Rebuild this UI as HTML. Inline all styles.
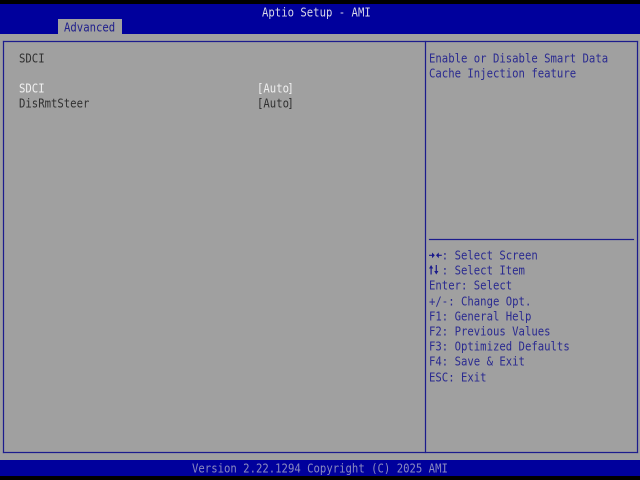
<!DOCTYPE html>
<html><head><meta charset="utf-8"><style>
html,body{margin:0;padding:0;background:#000}
#s{position:relative;width:640px;height:480px;overflow:hidden;background:#a0a0a0;font-family:"DejaVu Sans Mono","Liberation Mono",monospace;font-size:10.63px;line-height:15px;filter:blur(.3px)}
#s div{position:absolute}
.t{white-space:pre;color:#1a1a8c;height:15px;transform:scaleY(1.14);transform-origin:50% 50%}
.k{color:#303030}
.w{color:#f0f0f0}
.b{background:#00009c}
.v{color:#2a2a90}
.l{background:#1c1c8c;box-shadow:0 0 1px #3a3a9c}
.n{margin-left:-1.6px}
svg{position:absolute}
</style></head><body><div id="s">
<div style="left:0;top:0;width:640px;height:4px;background:#000"></div>
<div class="b" style="left:0;top:4px;width:640px;height:30px"></div>
<div style="left:58px;top:19px;width:64px;height:15px;background:#a0a0a0"></div>
<div class="t" style="left:64px;top:20px;color:#20208c">Advanced</div>
<div class="t" style="left:262px;top:5px;color:#d8d8e8">Aptio Setup - AMI</div>
<div class="l" style="left:3px;top:41px;width:635px;height:1px"></div>
<div class="l" style="left:3px;top:452px;width:635px;height:1px"></div>
<div class="l" style="left:3px;top:41px;width:1px;height:412px"></div>
<div class="l" style="left:637px;top:41px;width:1px;height:412px"></div>
<div class="l" style="left:425px;top:41px;width:1px;height:412px"></div>
<div class="l" style="left:429px;top:239px;width:205px;height:1px"></div>
<div class="t k" style="left:19px;top:51px">SDCI</div>
<div class="t w" style="left:19px;top:81px">SDCI</div>
<div class="t w" style="left:257px;top:81px">[Auto<span class="n">]</span></div>
<div class="t k" style="left:19px;top:96px">DisRmtSteer</div>
<div class="t k" style="left:257px;top:96px">[Auto<span class="n">]</span></div>
<div class="t v" style="left:429px;top:51px">Enable or Disable Smart Data</div>
<div class="t v" style="left:429px;top:66px">Cache Injection feature</div>
<svg style="left:429px;top:249px" width="13" height="13" viewBox="0 0 13 13" fill="#1a1a8c" stroke="none"><path d="M0 5.8H3V3.5L5.8 6.3L3 9.2V6.9H0ZM12.8 5.8H9.8V3.5L7 6.3L9.8 9.2V6.9H12.8Z"/></svg>
<div class="t v" style="left:429px;top:248px">  : Select Screen</div>
<svg style="left:429px;top:264px" width="13" height="13" viewBox="0 0 13 13" fill="#1a1a8c" stroke="none"><path d="M1.5 10.5V4.5H0L2.1 1L4.2 4.5H2.7V10.5ZM6.7 1V7H5.2L7.3 10.5L9.4 7H7.9V1Z"/></svg>
<div class="t v" style="left:429px;top:263px">  : Select Item</div>
<div class="t v" style="left:429px;top:278px">Enter: Select</div>
<div class="t v" style="left:429px;top:294px">+/-: Change Opt.</div>
<div class="t v" style="left:429px;top:309px">F1: General Help</div>
<div class="t v" style="left:429px;top:324px">F2: Previous Values</div>
<div class="t v" style="left:429px;top:339px">F3: Optimized Defaults</div>
<div class="t v" style="left:429px;top:354px">F4: Save &amp; Exit</div>
<div class="t v" style="left:429px;top:370px">ESC: Exit</div>
<div class="b" style="left:0;top:460px;width:640px;height:16px"></div>
<div class="t" style="left:192px;top:461px;color:#8a8ac0">Version 2.22.1294 Copyright (C) 2025 AMI</div>
<div style="left:0;top:476px;width:640px;height:4px;background:#000"></div>
</div></body></html>
